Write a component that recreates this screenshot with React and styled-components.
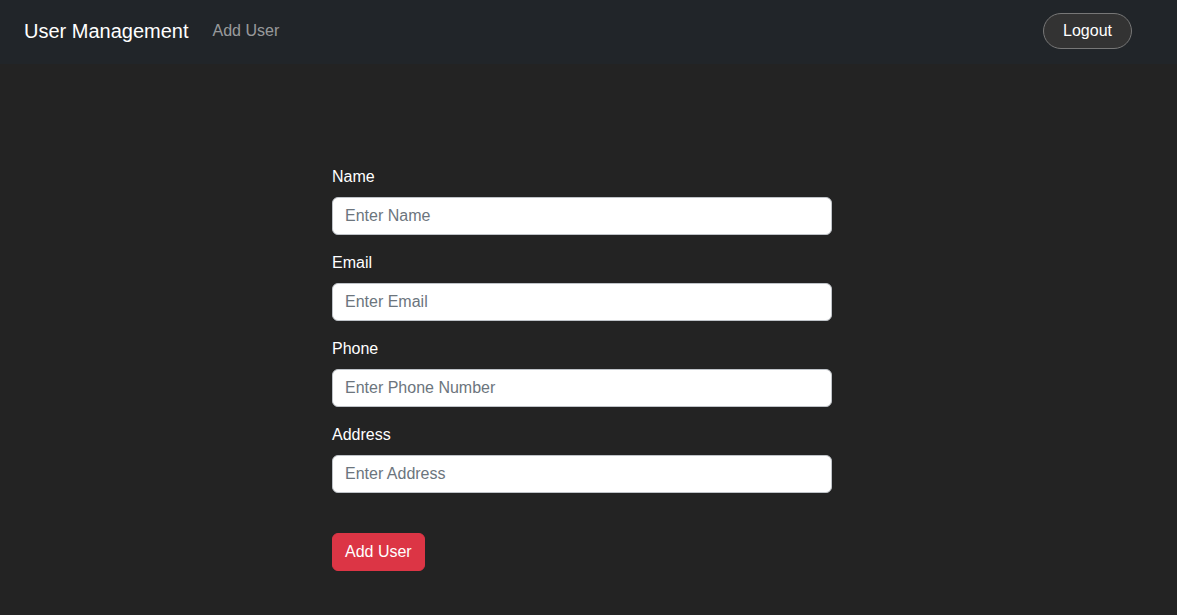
import React, { useState } from "react";
import styled, { createGlobalStyle } from "styled-components";

const GlobalStyle = createGlobalStyle`
  * {
    box-sizing: border-box;
  }
  body {
    margin: 0;
    background-color: #232323;
    font-family: "Liberation Sans", Arial, sans-serif;
    color: #fff;
  }
`;

const Navbar = styled.nav`
  display: flex;
  align-items: center;
  justify-content: space-between;
  height: 64px;
  padding: 0 45px 2px 24px;
  background-color: #212529;
`;

const NavLeft = styled.div`
  display: flex;
  align-items: center;
`;

const Brand = styled.a`
  font-size: 20px;
  line-height: 30px;
  color: #fff;
  text-decoration: none;
  margin-right: 16px;
`;

const NavLink = styled.a`
  font-size: 16px;
  line-height: 24px;
  padding: 8px;
  color: rgba(255, 255, 255, 0.55);
  text-decoration: none;
`;

const LogoutButton = styled.button`
  height: 36px;
  padding: 0 19px;
  font-family: inherit;
  font-size: 16px;
  color: #fff;
  background-color: #333;
  border: 1px solid #777;
  border-radius: 999px;
  cursor: pointer;
`;

const Main = styled.main`
  display: flex;
  justify-content: center;
  padding-top: 101px;
`;

const Form = styled.form`
  width: 500px;
  margin-right: 13px;
`;

const Field = styled.div`
  margin-bottom: 16px;
`;

const Label = styled.label`
  display: block;
  font-size: 16px;
  line-height: 24px;
  margin-bottom: 8px;
  color: #fff;
`;

const Input = styled.input`
  display: block;
  width: 100%;
  height: 38px;
  padding: 6px 12px;
  font-family: inherit;
  font-size: 16px;
  color: #212529;
  background-color: #fff;
  border: 1px solid #bfc3c8;
  border-radius: 6px;
  outline: none;

  &::placeholder {
    color: #6c757d;
  }
`;

const SubmitButton = styled.button`
  margin-top: 24px;
  height: 38px;
  padding: 0 12px;
  font-family: inherit;
  font-size: 16px;
  color: #fff;
  background-color: #dc3545;
  border: 1px solid #dc3545;
  border-radius: 6px;
  cursor: pointer;
`;

const fields = [
  { id: "name", label: "Name", placeholder: "Enter Name", type: "text" },
  { id: "email", label: "Email", placeholder: "Enter Email", type: "email" },
  { id: "phone", label: "Phone", placeholder: "Enter Phone Number", type: "text" },
  { id: "address", label: "Address", placeholder: "Enter Address", type: "text" },
];

const App = () => {
  const [values, setValues] = useState({});

  const handleChange = (e) => {
    setValues({ ...values, [e.target.name]: e.target.value });
  };

  return (
    <>
      <GlobalStyle />
      <Navbar>
        <NavLeft>
          <Brand href="#">User Management</Brand>
          <NavLink href="#">Add User</NavLink>
        </NavLeft>
        <LogoutButton>Logout</LogoutButton>
      </Navbar>
      <Main>
        <Form onSubmit={(e) => e.preventDefault()}>
          {fields.map((f) => (
            <Field key={f.id}>
              <Label htmlFor={f.id}>{f.label}</Label>
              <Input
                id={f.id}
                name={f.id}
                type={f.type}
                placeholder={f.placeholder}
                value={values[f.id] || ""}
                onChange={handleChange}
              />
            </Field>
          ))}
          <SubmitButton type="submit">Add User</SubmitButton>
        </Form>
      </Main>
    </>
  );
};

export default App;
